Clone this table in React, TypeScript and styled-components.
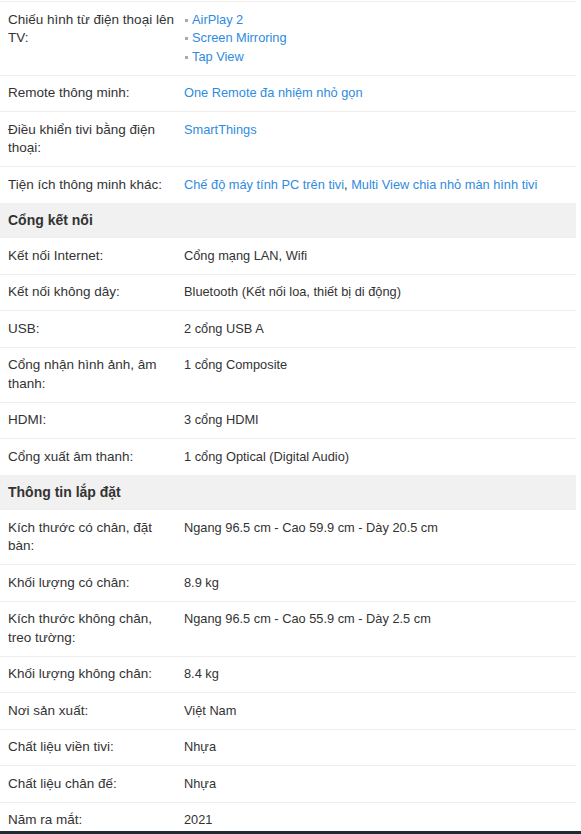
import React from "react";
import styled, { createGlobalStyle } from "styled-components";

const Global = createGlobalStyle`
  html, body { margin: 0; padding: 0; background: #fff; }
  body { font-family: "Liberation Sans", Arial, sans-serif; color: #333; }
`;

const Wrap = styled.div`
  width: 576px;
  padding-top: 1px;
`;

const Row = styled.div`
  display: grid;
  grid-template-columns: 167px 1fr;
  column-gap: 9px;
  padding: 8.5px 0 8.5px 8px;
  border-top: 1px solid #eee;
  line-height: 18.5px;
`;

const Label = styled.div`
  color: #333;
  font-size: 13.5px;
`;

const Value = styled.div`
  color: #333;
  font-size: 12.8px;
`;

const Link = styled.a`
  color: #2f8be0;
  text-decoration: none;
`;

const Header = styled.div`
  background: #f1f1f1;
  padding: 8px 0 8px 8px;
  font-size: 14px;
  line-height: 18.5px;
  font-weight: bold;
  color: #333;
`;

const BulletList = styled.ul`
  list-style: none;
  margin: 0;
  padding: 0;
`;

const Bullet = styled.li`
  display: flex;
  align-items: center;
  &::before {
    content: "";
    width: 3px;
    height: 3px;
    background: #aaa;
    margin: 1px 4px 0 1px;
    flex: none;
  }
`;

const BottomBar = styled.div`
  position: fixed;
  left: 0;
  right: 0;
  bottom: 0;
  height: 3px;
  background: #1f2c33;
`;

type Item =
  | { kind: "header"; title: string }
  | { kind: "row"; label: string; value: React.ReactNode };

const items: Item[] = [
  {
    kind: "row",
    label: "Chiếu hình từ điện thoại lên TV:",
    value: (
      <BulletList>
        <Bullet><Link>AirPlay 2</Link></Bullet>
        <Bullet><Link>Screen Mirroring</Link></Bullet>
        <Bullet><Link>Tap View</Link></Bullet>
      </BulletList>
    ),
  },
  { kind: "row", label: "Remote thông minh:", value: <Link>One Remote đa nhiệm nhỏ gọn</Link> },
  { kind: "row", label: "Điều khiển tivi bằng điện thoại:", value: <Link>SmartThings</Link> },
  {
    kind: "row",
    label: "Tiện ích thông minh khác:",
    value: (
      <>
        <Link>Chế độ máy tính PC trên tivi</Link>, <Link>Multi View chia nhỏ màn hình tivi</Link>
      </>
    ),
  },
  { kind: "header", title: "Cổng kết nối" },
  { kind: "row", label: "Kết nối Internet:", value: "Cổng mạng LAN, Wifi" },
  { kind: "row", label: "Kết nối không dây:", value: "Bluetooth (Kết nối loa, thiết bị di động)" },
  { kind: "row", label: "USB:", value: "2 cổng USB A" },
  { kind: "row", label: "Cổng nhận hình ảnh, âm thanh:", value: "1 cổng Composite" },
  { kind: "row", label: "HDMI:", value: "3 cổng HDMI" },
  { kind: "row", label: "Cổng xuất âm thanh:", value: "1 cổng Optical (Digital Audio)" },
  { kind: "header", title: "Thông tin lắp đặt" },
  { kind: "row", label: "Kích thước có chân, đặt bàn:", value: "Ngang 96.5 cm - Cao 59.9 cm - Dày 20.5 cm" },
  { kind: "row", label: "Khối lượng có chân:", value: "8.9 kg" },
  { kind: "row", label: "Kích thước không chân, treo tường:", value: "Ngang 96.5 cm - Cao 55.9 cm - Dày 2.5 cm" },
  { kind: "row", label: "Khối lượng không chân:", value: "8.4 kg" },
  { kind: "row", label: "Nơi sản xuất:", value: "Việt Nam" },
  { kind: "row", label: "Chất liệu viền tivi:", value: "Nhựa" },
  { kind: "row", label: "Chất liệu chân đế:", value: "Nhựa" },
  { kind: "row", label: "Năm ra mắt:", value: "2021" },
];

export default function App() {
  return (
    <>
      <Global />
      <Wrap>
        {items.map((it, i) =>
          it.kind === "header" ? (
            <Header key={i}>{it.title}</Header>
          ) : (
            <Row key={i}>
              <Label>{it.label}</Label>
              <Value>{it.value}</Value>
            </Row>
          )
        )}
      </Wrap>
      <BottomBar />
    </>
  );
}
